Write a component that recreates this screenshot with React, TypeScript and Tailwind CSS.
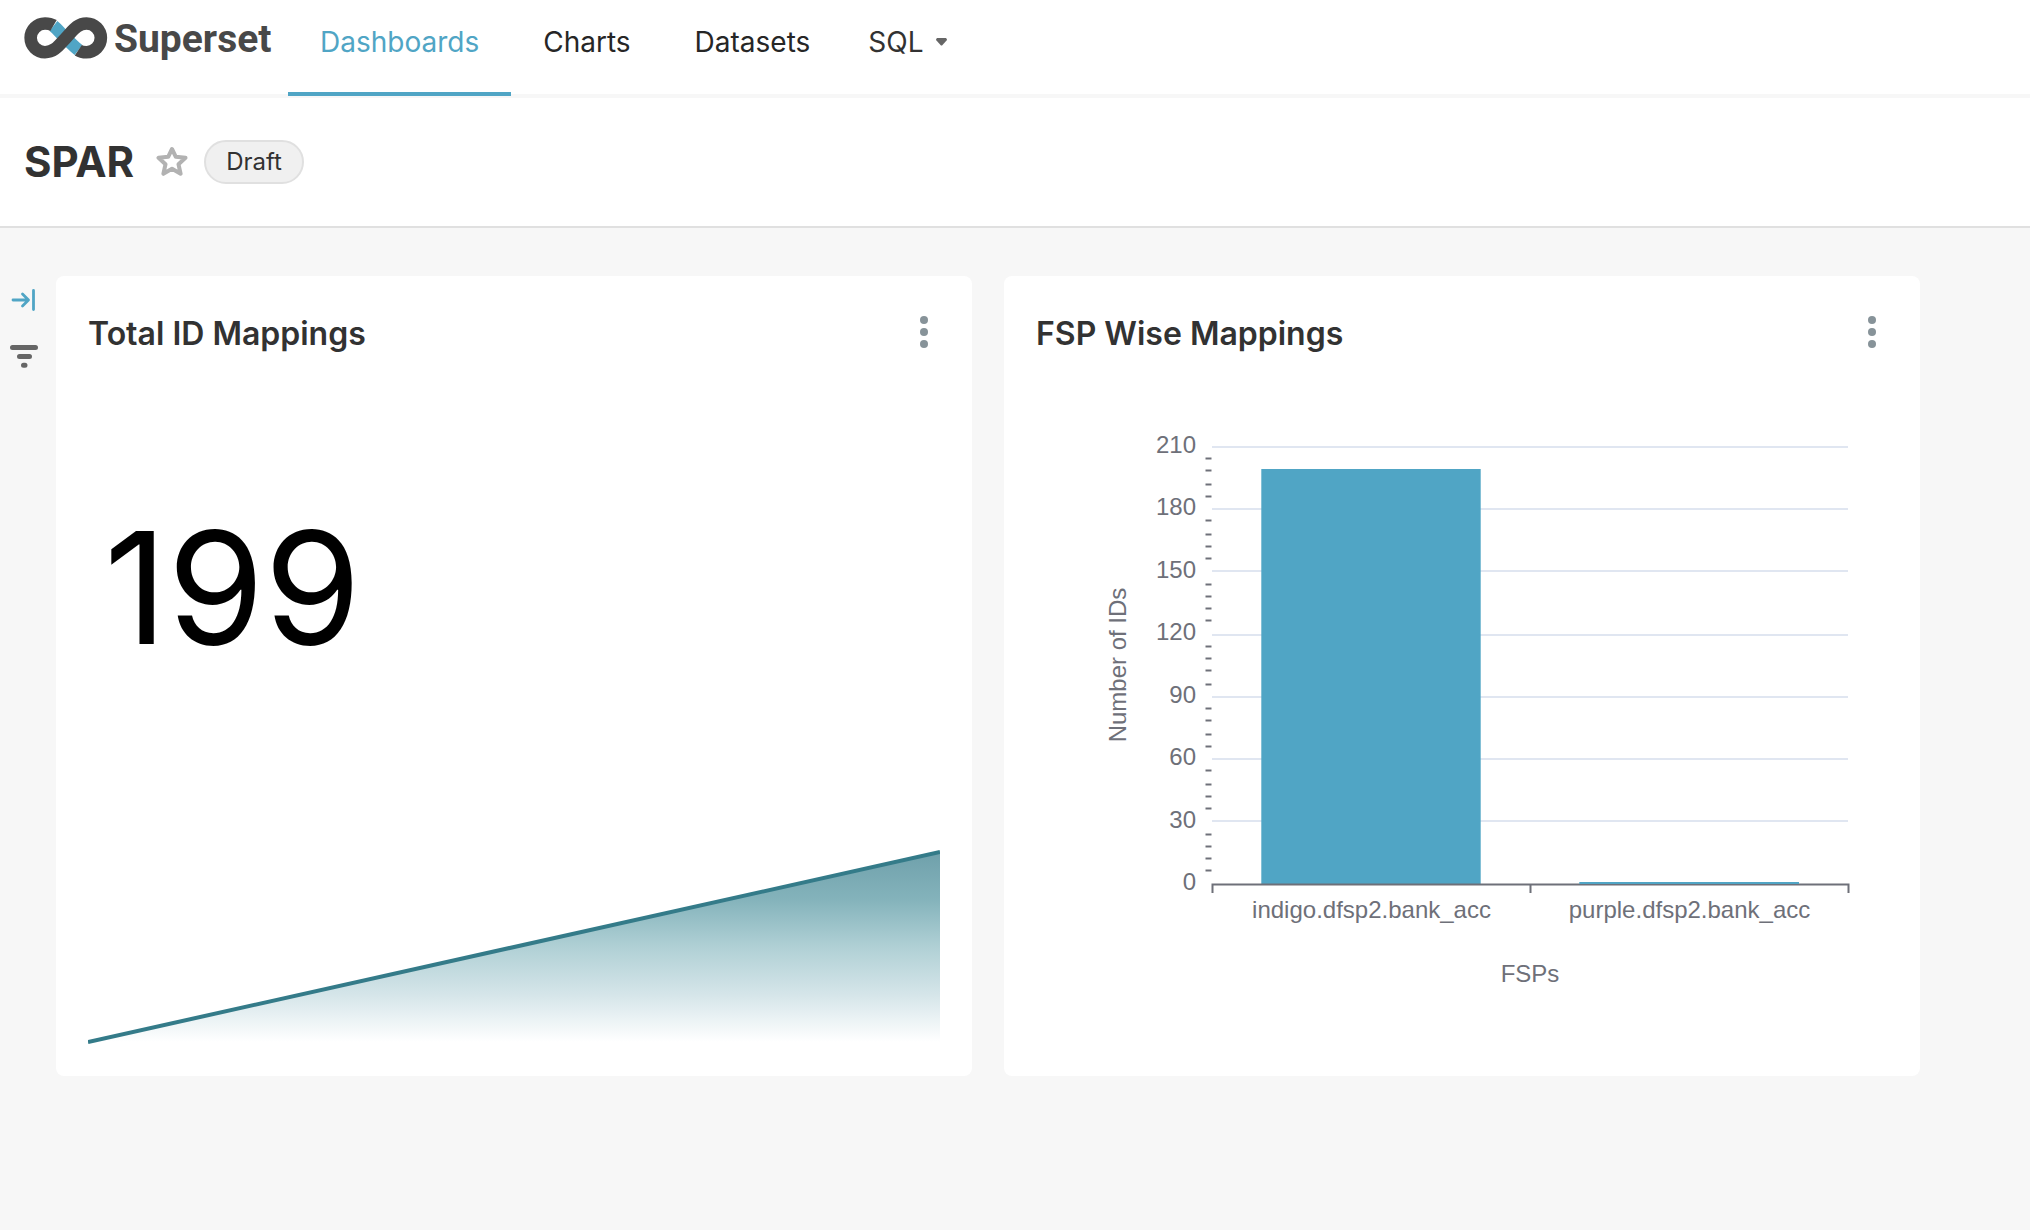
import React from "react";

const helvetica = '"Liberation Sans", Arial, sans-serif';

function Logo() {
  return (
    <svg width="84" height="42" viewBox="0 0 84 42" fill="none" aria-hidden="true">
      <g strokeWidth="12.6">
        <path d="M29.5 9C34 12.5 37 17 42 21.500S50 29.500 54.500 33" stroke="#50a5c5" />
        <path
          d="M29.500 8.500C27 7 24.500 6.500 21 6.500A14.300 14.300 0 0 0 21 35.200C31 35.200 35.500 27.500 42 20.800S53 6.500 62.500 6.500A14.300 14.300 0 0 1 62.500 35.200C59 35.200 56.500 34.700 54.300 33.200"
          stroke="#484848"
        />
      </g>
    </svg>
  );
}

function KebabButton({ label }: { label: string }) {
  return (
    <button type="button" aria-label={label} className="flex h-8 w-8 items-center justify-center">
      <svg width="8" height="32" viewBox="0 0 8 32" fill="#879399">
        <circle cx="4" cy="4" r="4" />
        <circle cx="4" cy="16" r="4" />
        <circle cx="4" cy="28" r="4" />
      </svg>
    </button>
  );
}

function Card({ title, children }: { title: string; children: React.ReactNode }) {
  return (
    <section className="flex min-h-[800px] min-w-0 flex-1 flex-col rounded-lg bg-white px-8 pt-10 pb-8">
      <div className="flex items-start justify-between">
        <h2 className="text-[32px] leading-9 font-semibold text-[#323232]">{title}</h2>
        <KebabButton label={`More options for ${title}`} />
      </div>
      {children}
    </section>
  );
}

function TrendArea() {
  return (
    <svg className="mt-auto w-full" viewBox="0 0 852 196" role="img" aria-label="Trend of total ID mappings">
      <defs>
        <linearGradient id="trend" x1="0" y1="0" x2="0" y2="1">
          <stop offset="0" stopColor="#6fa0ab" />
          <stop offset="0.25" stopColor="#84b3bb" />
          <stop offset="0.5" stopColor="#b0d0d5" />
          <stop offset="0.75" stopColor="#d5e5e9" />
          <stop offset="1" stopColor="#ffffff" />
        </linearGradient>
      </defs>
      <path d="M0 194L852 4V194Z" fill="url(#trend)" />
      <path d="M0 194L852 4" stroke="#347b89" strokeWidth="4" />
    </svg>
  );
}

const gridLines = [
  { label: "210", y: 47 },
  { label: "180", y: 109 },
  { label: "150", y: 171 },
  { label: "120", y: 235 },
  { label: "90", y: 297 },
  { label: "60", y: 359 },
  { label: "30", y: 421 },
  { label: "0", y: 484 },
];

const minorTicks = [
  58.5, 70.5, 84.5, 96.5, 120.5, 134.5, 146.5, 158.5, 184.5, 196.5, 208.5, 220.5, 246.5, 258.5, 270.5, 284.5, 308.5,
  320.5, 334.5, 346.5, 370.5, 384.5, 396.5, 408.5, 434.5, 446.5, 458.5, 470.5,
];

function BarChart() {
  return (
    <svg
      className="mt-auto w-full"
      viewBox="0 0 852 644"
      role="img"
      aria-label="Number of IDs by FSP"
      fontFamily={helvetica}
      fontSize="24"
      fill="#6e7079"
    >
      {gridLines.map(({ label, y }, i) => (
        <g key={label}>
          {label !== "0" && <path d={`M176 ${y}H812`} stroke="#e0e6f1" strokeWidth="2" />}
          <text x="160" y={52.5 + i * 62.5} textAnchor="end">
            {label}
          </text>
        </g>
      ))}
      {minorTicks.map((y) => (
        <path key={y} d={`M169.500 ${y}H175.500`} stroke="#6e7079" strokeWidth="2" />
      ))}
      <rect x="225.300" y="69" width="219.400" height="415" fill="#50a5c5" />
      <path d="M175.500 484.500H813.500M176.500 484V493M494.500 484V493M812.500 484V493" stroke="#6e7079" strokeWidth="2" fill="none" />
      <rect x="543.300" y="482" width="219.700" height="2" fill="#50a5c5" />
      <text x="335.500" y="518" textAnchor="middle">indigo.dfsp2.bank_acc</text>
      <text x="653.500" y="518" textAnchor="middle">purple.dfsp2.bank_acc</text>
      <text x="494" y="582" textAnchor="middle">FSPs</text>
      <text transform="translate(90 265) rotate(-90)" textAnchor="middle">Number of IDs</text>
    </svg>
  );
}

export default function App() {
  return (
    <div className="flex min-h-screen flex-col bg-[#f7f7f7] font-['Inter',sans-serif]">
      <header className="flex h-[98px] border-b-4 border-[#f7f7f7] bg-white">
        <a href="#home" className="flex h-[76px] w-[288px] items-center gap-[6px] pl-6 font-['Roboto',sans-serif] text-[39px] font-bold text-[#484848]">
          <Logo />
          <span className="pt-[2px]">Superset</span>
        </a>
        <nav className="flex text-[28px] leading-[84px] text-[#262626]">
          <a href="#dashboards" className="-mb-[2px] border-b-4 border-[#50a5c5] px-8 text-[#50a5c5]">
            Dashboards
          </a>
          <a href="#charts" className="px-8">Charts</a>
          <a href="#datasets" className="px-8">Datasets</a>
          <button type="button" className="flex h-[84px] items-center gap-3 px-[26px] text-[#323232]">
            SQL
            <svg width="11" height="8" viewBox="0 0 11 8" fill="#666666" aria-hidden="true">
              <path d="M1 0H10Q11 1 11 2L6.500 7Q5.500 8 4.500 7L0 2Q0 1 1 0Z" />
            </svg>
          </button>
        </nav>
      </header>

      <div className="flex h-[130px] items-center border-b-2 border-[#e0e0e0] bg-white px-6">
        <h1 className="text-[42px] leading-none font-bold text-[#323232]">SPAR</h1>
        <button type="button" aria-label="Favorite dashboard" className="ml-[22px] flex w-8 justify-center">
          <svg width="32" height="32" viewBox="0 0 32 32" fill="none" stroke="#b2b2b2" strokeWidth="4" strokeLinejoin="round">
            <path d="M16 3L19.800 10.800L29.500 11.800L22.500 18.300L24.600 27.800L16 22.800L7.400 27.800L9.500 18.300L2.500 11.800L12.200 10.800Z" />
          </svg>
        </button>
        <span className="ml-4 rounded-full border-2 border-[#e0e0e0] bg-[#f0f0f0] px-5 text-2xl leading-10 text-[#323232]">Draft</span>
      </div>

      <div className="flex flex-1 items-start">
        <aside className="flex w-14 flex-col gap-8 pt-[60px] pl-[10px]">
          <button type="button" aria-label="Expand filters" className="h-6 w-7">
            <svg width="28" height="24" viewBox="0 0 28 24" fill="none" stroke="#50a5c5" strokeWidth="2.800" strokeLinecap="round" strokeLinejoin="round">
              <path d="M3 12H18M12.500 6L18.500 12L12.500 18M23.500 2.500V21.500" />
            </svg>
          </button>
          <button type="button" aria-label="Filters" className="h-6 w-7">
            <svg width="28" height="24" viewBox="0 0 28 24" fill="none" stroke="#666666" strokeWidth="5" strokeLinecap="round">
              <path d="M2.500 3.500H25.500M9.500 12.500H19.500M13.500 21.300H15" />
            </svg>
          </button>
        </aside>
        <main className="flex min-w-0 flex-1 gap-8 pt-12 pr-[110px]">
          <Card title="Total ID Mappings">
            <p className="mt-[158px] ml-4 text-[156px] leading-none text-black">199</p>
            <TrendArea />
          </Card>
          <Card title="FSP Wise Mappings">
            <BarChart />
          </Card>
        </main>
      </div>
    </div>
  );
}
